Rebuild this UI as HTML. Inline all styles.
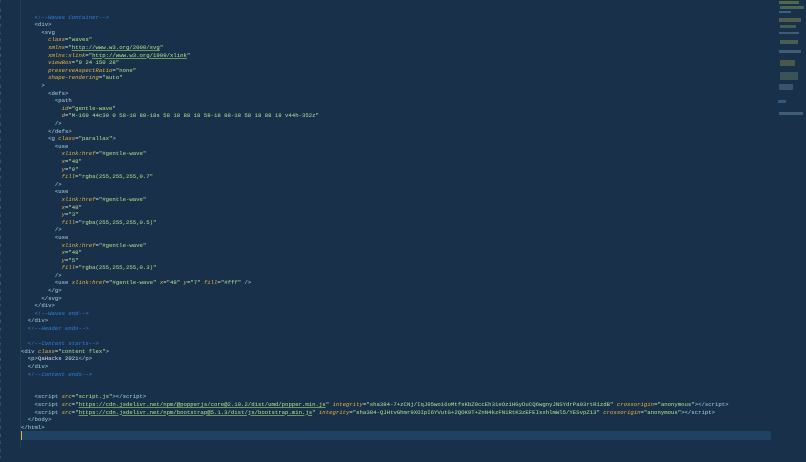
<!DOCTYPE html>
<html><head><meta charset="utf-8"><style>
html,body{margin:0;padding:0;width:806px;height:448px;overflow:hidden;background:#19304a;}
.ed{position:absolute;left:0;top:0;width:806px;height:448px;background:#19304a;}
.gut{position:absolute;left:20px;top:0;width:1px;height:448px;background:#233d58;}
.ln{position:absolute;left:-2px;top:-1px;font:5.6px/7.59px "Liberation Mono",monospace;color:#55708a;margin:0;white-space:pre;}
pre.code{position:absolute;left:21px;top:-1.5px;margin:0;font:5.65px/7.59px "Liberation Mono",monospace;color:#cfe3ee;white-space:pre;}
.c{color:#2f7fe0;font-style:italic}
.t{color:#a6d4e6}
.a{color:#e6b43a;font-style:italic}
.s{color:#b2e48e}
.u{color:#b2e48e;text-decoration:underline;text-decoration-color:#6a9a5a}
.cur{position:absolute;left:20px;top:431px;width:751px;height:9px;background:#1f4263;}
.caret{position:absolute;left:20px;top:431px;width:1.5px;height:9px;background:#e0b030;}
.mm{position:absolute;height:1px;}
</style></head><body><div class="ed">
<div class="cur"></div><div class="caret"></div>
<div class="gut"></div>
<pre class="ln">7
8
9
0
1
2
3
4
5
6
7
8
9
0
1
2
3
4
5
6
7
8
9
0
1
2
3
4
5
6
7
8
9
0
1
2
3
4
5
6
7
8
9
0
1
2
3
4
5
6
7
8
9
0
1
2
3
4
5
6
7</pre>
<pre class="code">


    <span class="c">&lt;!--Waves Container--&gt;</span>
    <span class="t">&lt;div&gt;</span>
      <span class="t">&lt;svg</span>
        <span class="a">class</span>=<span class="s">"waves"</span>
        <span class="a">xmlns</span>=<span class="s">"</span><span class="u">http://www.w3.org/2000/svg</span><span class="s">"</span>
        <span class="a">xmlns:xlink</span>=<span class="s">"</span><span class="u">http://www.w3.org/1999/xlink</span><span class="s">"</span>
        <span class="a">viewBox</span>=<span class="s">"0 24 150 28"</span>
        <span class="a">preserveAspectRatio</span>=<span class="s">"none"</span>
        <span class="a">shape-rendering</span>=<span class="s">"auto"</span>
      <span class="t">&gt;</span>
        <span class="t">&lt;defs&gt;</span>
          <span class="t">&lt;path</span>
            <span class="a">id</span>=<span class="s">"gentle-wave"</span>
            <span class="a">d</span>=<span class="s">"M-160 44c30 0 58-18 88-18s 58 18 88 18 58-18 88-18 58 18 88 18 v44h-352z"</span>
          <span class="t">/&gt;</span>
        <span class="t">&lt;/defs&gt;</span>
        <span class="t">&lt;g</span> <span class="a">class</span>=<span class="s">"parallax"</span><span class="t">&gt;</span>
          <span class="t">&lt;use</span>
            <span class="a">xlink:href</span>=<span class="s">"#gentle-wave"</span>
            <span class="a">x</span>=<span class="s">"48"</span>
            <span class="a">y</span>=<span class="s">"0"</span>
            <span class="a">fill</span>=<span class="s">"rgba(255,255,255,0.7"</span>
          <span class="t">/&gt;</span>
          <span class="t">&lt;use</span>
            <span class="a">xlink:href</span>=<span class="s">"#gentle-wave"</span>
            <span class="a">x</span>=<span class="s">"48"</span>
            <span class="a">y</span>=<span class="s">"3"</span>
            <span class="a">fill</span>=<span class="s">"rgba(255,255,255,0.5)"</span>
          <span class="t">/&gt;</span>
          <span class="t">&lt;use</span>
            <span class="a">xlink:href</span>=<span class="s">"#gentle-wave"</span>
            <span class="a">x</span>=<span class="s">"48"</span>
            <span class="a">y</span>=<span class="s">"5"</span>
            <span class="a">fill</span>=<span class="s">"rgba(255,255,255,0.3)"</span>
          <span class="t">/&gt;</span>
          <span class="t">&lt;use</span> <span class="a">xlink:href</span>=<span class="s">"#gentle-wave"</span> <span class="a">x</span>=<span class="s">"48"</span> <span class="a">y</span>=<span class="s">"7"</span> <span class="a">fill</span>=<span class="s">"#fff"</span> <span class="t">/&gt;</span>
        <span class="t">&lt;/g&gt;</span>
      <span class="t">&lt;/svg&gt;</span>
    <span class="t">&lt;/div&gt;</span>
    <span class="c">&lt;!--Waves end--&gt;</span>
  <span class="t">&lt;/div&gt;</span>
  <span class="c">&lt;!--Header ends--&gt;</span>

  <span class="c">&lt;!--Content starts--&gt;</span>
<span class="t">&lt;div</span> <span class="a">class</span>=<span class="s">"content flex"</span><span class="t">&gt;</span>
  <span class="t">&lt;p&gt;</span>QaHacks 2021<span class="t">&lt;/p&gt;</span>
  <span class="t">&lt;/div&gt;</span>
  <span class="c">&lt;!--Content ends--&gt;</span>


    <span class="t">&lt;script</span> <span class="a">src</span>=<span class="s">"script.js"</span><span class="t">&gt;&lt;/script&gt;</span>
    <span class="t">&lt;script</span> <span class="a">src</span>=<span class="s">"</span><span class="u">https://cdn.jsdelivr.net/npm/@popperjs/core@2.10.2/dist/umd/popper.min.js</span><span class="s">"</span> <span class="a">integrity</span>=<span class="s">"sha384-7+zCNj/IqJ95wo16oMtfsKbZ9ccEh31eOz1HGyDuCQ6wgnyJNSYdrPa03rtR1zdB"</span> <span class="a">crossorigin</span>=<span class="s">"anonymous"</span><span class="t">&gt;&lt;/script&gt;</span>
    <span class="t">&lt;script</span> <span class="a">src</span>=<span class="s">"</span><span class="u">https://cdn.jsdelivr.net/npm/bootstrap@5.1.3/dist/js/bootstrap.min.js</span><span class="s">"</span> <span class="a">integrity</span>=<span class="s">"sha384-QJHtvGhmr9XOIpI6YVutG+2QOK9T+ZnN4kzFN1RtK3zEFEIsxhlmWl5/YESvpZ13"</span> <span class="a">crossorigin</span>=<span class="s">"anonymous"</span><span class="t">&gt;&lt;/script&gt;</span>
  <span class="t">&lt;/body&gt;</span>
<span class="t">&lt;/html&gt;</span>
</pre>
<div class="mm" style="left:779px;top:1px;width:20px;height:3px;background:#7f8a4a;opacity:.6"></div>
<div class="mm" style="left:780px;top:6px;width:24px;height:3px;background:#6b8a5a;opacity:.6"></div>
<div class="mm" style="left:779px;top:11px;width:12px;height:2px;background:#4b7fb0;opacity:.6"></div>
<div class="mm" style="left:779px;top:18px;width:22px;height:4px;background:#8a8a4a;opacity:.5"></div>
<div class="mm" style="left:780px;top:25px;width:16px;height:3px;background:#6b8a5a;opacity:.5"></div>
<div class="mm" style="left:779px;top:32px;width:20px;height:2px;background:#6a8aa0;opacity:.5"></div>
<div class="mm" style="left:780px;top:40px;width:18px;height:4px;background:#7a8a5a;opacity:.5"></div>
<div class="mm" style="left:779px;top:50px;width:22px;height:3px;background:#6a8aa0;opacity:.5"></div>
<div class="mm" style="left:780px;top:60px;width:15px;height:6px;background:#8a8a4a;opacity:.45"></div>
<div class="mm" style="left:780px;top:72px;width:18px;height:8px;background:#6b8a6a;opacity:.4"></div>
<div class="mm" style="left:779px;top:84px;width:14px;height:6px;background:#6a8aa0;opacity:.4"></div>
<div class="mm" style="left:778px;top:100px;width:8px;height:3px;background:#4b7fb0;opacity:.5"></div>
<div class="mm" style="left:779px;top:112px;width:24px;height:3px;background:#6a8aa0;opacity:.5"></div>
</div></body></html>
